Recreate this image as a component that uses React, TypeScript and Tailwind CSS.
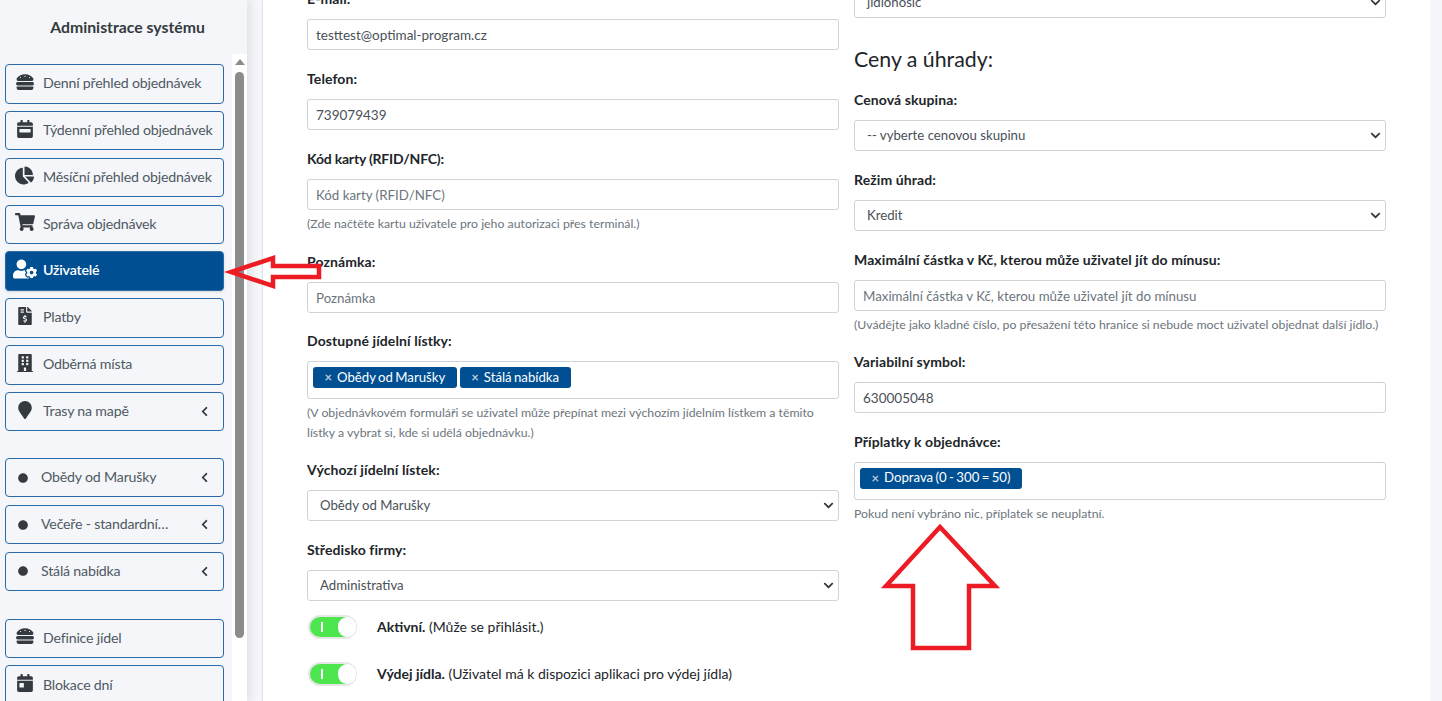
import React from "react";
import { FaHamburger, FaCalendarWeek, FaCalendarDay, FaChartPie, FaShoppingCart, FaUserCog, FaFileInvoiceDollar, FaBuilding, FaMapMarker, FaCircle, FaChevronLeft, FaChevronDown } from "react-icons/fa";

const font = "font-['Lato','Liberation_Sans',sans-serif]";

function NavItem({ icon, label, active, chevron, dot, className = "" }: { icon?: React.ReactNode; label: string; active?: boolean; chevron?: boolean; dot?: boolean; className?: string }) {
  return (
    <div className={`flex items-center h-[39.5px] w-[219px] rounded-[4px] border border-[#2a6aa8] shrink-0 text-[14.2px] tracking-[-0.2px] ${active ? "bg-[#004f93] text-white font-semibold shadow-sm" : "text-[#4f5962]"} ${className || "mb-[7.35px]"}`}>
      <span className={`flex justify-center shrink-0 ${dot ? "w-[35px] text-[10px] pr-[1px]" : "w-[37px] text-[18px] pb-[4px]"} ${active ? "text-white" : "text-[#343a40]"}`}>{dot ? <FaCircle /> : icon}</span>
      <span className="truncate flex-1 min-w-0 pb-[2px]">{label}</span>
      {chevron && <FaChevronLeft className="text-[11px] text-[#343a40] ml-[28px] mr-[13px] shrink-0" />}
    </div>
  );
}

function Label({ children }: { children: React.ReactNode }) {
  return <div className="h-[21px] leading-[20px] mb-[9px] text-[14px] tracking-[0.1px] font-bold text-[#212529]">{children}</div>;
}

function Input({ value, placeholder }: { value?: string; placeholder?: string }) {
  return <div className={`h-[31px] leading-[30px] border border-[#ced4da] rounded-[3px] bg-white px-[8px] ${value ? "text-[13.5px] text-[#495057]" : "text-[13.3px] text-[#6c757d]"}`}>{value ?? placeholder}</div>;
}

function Select({ value }: { value: string }) {
  return (
    <div className="h-[31px] border border-[#ced4da] rounded-[3px] bg-white pl-[12px] pr-[4px] text-[13.2px] text-[#495057] flex items-center justify-between">
      <span>{value}</span>
      <FaChevronDown className="text-[11px] text-[#343a40]" />
    </div>
  );
}

function Field({ label, children, help, mb = "mb-[19px]" }: { label: React.ReactNode; children: React.ReactNode; help?: React.ReactNode; mb?: string }) {
  return (
    <div className={mb}>
      <Label>{label}</Label>
      {children}
      {help && <div className="mt-[4px] text-[12.3px] leading-[20px] text-[#6c757d]">{help}</div>}
    </div>
  );
}

function Tag({ children }: { children: React.ReactNode }) {
  return (
    <span className="inline-flex items-center h-[21px] rounded-[3px] bg-[#004f93] text-white text-[13.2px] [word-spacing:-1px] px-[11.5px] gap-[5px]">
      <span className="text-[#b8c7d8] text-[13px] font-bold leading-none">×</span>
      {children}
    </span>
  );
}

function TagBox({ children }: { children: React.ReactNode }) {
  return <div className="h-[38px] border border-[#ced4da] rounded-[3px] bg-white flex items-start gap-[3px] pl-[5px] pt-[5px]">{children}</div>;
}

function Toggle({ children }: { children: React.ReactNode }) {
  return (
    <div className="flex items-center h-[24px] mb-[23px]">
      <div className="relative top-[1px] w-[49px] h-[24px] rounded-full bg-[#e6e6e6] shrink-0 ml-[1px]">
        <div className="absolute left-[2px] top-[2px] w-[44px] h-[20px] rounded-full bg-[#4ee64e]" />
        <div className="absolute left-[13px] top-[7px] w-[2px] h-[10px] bg-white" />
        <div className="absolute right-[1px] top-[2px] w-[18px] h-[20px] rounded-full bg-white" />
      </div>
      <div className="ml-[20px] text-[14px] text-[#212529]">{children}</div>
    </div>
  );
}

export default function App() {
  return (
    <div className={`${font} relative flex h-[701px] w-[1442px] overflow-hidden bg-[#f4f6f9]`}>
      <aside className="flex flex-col w-[247px] shrink-0 h-full shadow-[4px_0_8px_rgba(0,0,0,0.08)] bg-[#f4f6f9]">
        <div className="h-[54px] shrink-0 flex items-center justify-center pl-[8px] text-[15.8px] font-bold text-[#343a40]">Administrace systému</div>
        <div className="flex flex-1 min-h-0">
          <div className="w-[232px] pt-[10px] pl-[5px] overflow-hidden">
            <NavItem icon={<FaHamburger />} label="Denní přehled objednávek" />
            <NavItem icon={<FaCalendarWeek />} label="Týdenní přehled objednávek" />
            <NavItem icon={<FaChartPie className="text-[19px]" />} label="Měsíční přehled objednávek" />
            <NavItem icon={<FaShoppingCart className="text-[20px]" />} label="Správa objednávek" />
            <NavItem icon={<FaUserCog className="text-[24px]" />} label="Uživatelé" active />
            <NavItem icon={<FaFileInvoiceDollar />} label="Platby" />
            <NavItem icon={<FaBuilding />} label="Odběrná místa" />
            <NavItem icon={<FaMapMarker />} label="Trasy na mapě" chevron className="mb-[26.5px]" />
            <NavItem dot label="Obědy od Marušky" chevron />
            <NavItem dot label="Večeře - standardní nabídka" chevron />
            <NavItem dot label="Stálá nabídka" chevron className="mb-[27.5px]" />
            <NavItem icon={<FaHamburger />} label="Definice jídel" />
            <NavItem icon={<FaCalendarDay />} label="Blokace dní" />
          </div>
          <div className="relative w-[15px] bg-white">
            <div className="absolute left-[3px] top-[5px] w-0 h-0 border-x-[5px] border-x-transparent border-b-[6px] border-b-[#8c8c8c]" />
            <div className="absolute left-[3px] top-[18px] w-[9px] h-[566px] rounded-[5px] bg-[#8c8c8c]" />
          </div>
        </div>
      </aside>
      <main className="flex-1 min-w-0 pl-[15px] pr-[12px]">
        <div className="h-full bg-white border-l border-[#dee2e6] pl-[44px] overflow-hidden">
          <div className="flex gap-[15px] -mt-[11px]">
            <div className="w-[532px] shrink-0">
              <Field label="E-mail:"><Input value="testtest@optimal-program.cz" /></Field>
              <Field label="Telefon:"><Input value="739079439" /></Field>
              <Field label={<span className="tracking-[-0.2px]">Kód karty (RFID/NFC):</span>} help="(Zde načtěte kartu uživatele pro jeho autorizaci přes terminál.)" mb="mb-[18px]"><Input placeholder="Kód karty (RFID/NFC)" /></Field>
              <Field label="Poznámka:" mb="mb-[18px]"><Input placeholder="Poznámka" /></Field>
              <Field label="Dostupné jídelní lístky:" help={<>(V objednávkovém formuláři se uživatel může přepínat mezi výchozím jídelním lístkem a těmito<br />lístky a vybrat si, kde si udělá objednávku.)</>} mb="mb-[17px]">
                <TagBox>
                  <Tag>Obědy od Marušky</Tag>
                  <Tag>Stálá nabídka</Tag>
                </TagBox>
              </Field>
              <Field label="Výchozí jídelní lístek:"><Select value="Obědy od Marušky" /></Field>
              <Field label="Středisko firmy:" mb="mb-[13px]"><Select value="Administrativa" /></Field>
              <Toggle><b>Aktivní.</b> (Může se přihlásit.)</Toggle>
              <Toggle><b>Výdej jídla.</b> (Uživatel má k dispozici aplikaci pro výdej jídla)</Toggle>
            </div>
            <div className="w-[532px] shrink-0">
              <div className="-mt-[2px] mb-[26px]"><Select value="jídlonosič" /></div>
              <h2 className="text-[21.3px] leading-[30px] text-[#212529] mb-[16px]">Ceny a úhrady:</h2>
              <Field label="Cenová skupina:"><Select value="-- vyberte cenovou skupinu" /></Field>
              <Field label="Režim úhrad:"><Select value="Kredit" /></Field>
              <Field label="Maximální částka v Kč, kterou může uživatel jít do mínusu:" help="(Uvádějte jako kladné číslo, po přesažení této hranice si nebude moct uživatel objednat další jídlo.)" mb="mb-[16.5px]"><Input placeholder="Maximální částka v Kč, kterou může uživatel jít do mínusu" /></Field>
              <Field label="Variabilní symbol:"><Input value="630005048" /></Field>
              <Field label="Příplatky k objednávce:" help="Pokud není vybráno nic, příplatek se neuplatní.">
                <TagBox>
                  <Tag>Doprava (0 - 300 = 50)</Tag>
                </TagBox>
              </Field>
            </div>
          </div>
        </div>
      </main>
      <svg className="absolute left-0 top-0 pointer-events-none" width="1442" height="701" fill="none" stroke="#ed1c24" strokeWidth="4.5">
        <polygon points="319,266 273,266 273,258 231,272 273,286 273,277 319,277" />
        <polygon points="940,527 886,586 913,586 913,648 969,648 969,586 995,586" />
      </svg>
    </div>
  );
}
